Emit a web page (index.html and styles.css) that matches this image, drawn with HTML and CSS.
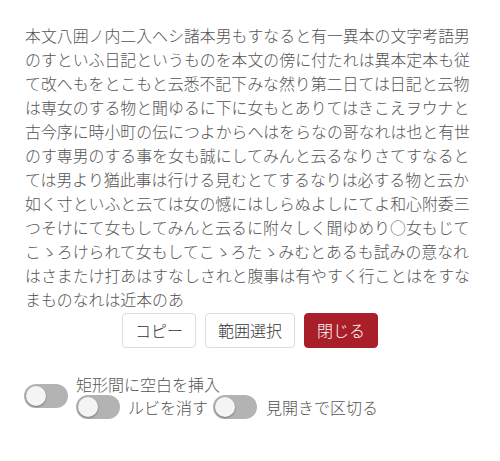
FILE: index.html
```html
<!DOCTYPE html>
<html lang="ja">
<head>
<meta charset="utf-8">
<link rel="stylesheet" href="styles.css">
</head>
<body>
<div class="dialog">
  <p class="text">本文八囲ノ内二入ヘシ諸本男もすなると有一異本の文字考語男のすといふ日記というものを本文の傍に付たれは異本定本も従て改へもをとこもと云悉不記下みな然り第二日ては日記と云物は専女のする物と聞ゆるに下に女もとありてはきこえヲウナと古今序に時小町の伝につよからへはをらなの哥なれは也と有世のす専男のする事を女も誠にしてみんと云るなりさてすなるとては男より猶此事は行ける見むとてするなりは必する物と云か如く寸といふと云ては女の憾にはしらぬよしにてよ和心附委三つそけにて女もしてみんと云るに附々しく聞ゆめり○女もじてこゝろけられて女もしてこゝろたゝみむとあるも試みの意なれはさまたけ打あはすなしされと腹事は有やすく行ことはをすなまものなれは近本のあ</p>
  <div class="buttons">
    <button class="btn">コピー</button>
    <button class="btn">範囲選択</button>
    <button class="btn btn-primary">閉じる</button>
  </div>
  <div class="options">
    <span class="toggle"><span class="knob"></span></span>
    <div class="opt-col">
      <span class="label">矩形間に空白を挿入</span>
      <div class="opt-row">
        <span class="toggle"><span class="knob"></span></span>
        <span class="label label-2">ルビを消す</span>
        <span class="toggle"><span class="knob"></span></span>
        <span class="label label-3">見開きで区切る</span>
      </div>
    </div>
  </div>
</div>
</body>
</html>
```
FILE: styles.css
```css
html, body {
  margin: 0;
  padding: 0;
  background: #ffffff;
}
body {
  font-family: "Noto Sans CJK JP", sans-serif;
  font-weight: 300;
  color: #555555;
}
.dialog {
  width: 452px;
  padding: 24px 23px 0 25px;
}
.text {
  margin: 0;
  font-size: 15.9px;
  line-height: 24px;
  color: #555555;
  word-break: break-all;
}
.buttons {
  display: flex;
  justify-content: center;
  gap: 9px;
  margin-top: 1px;
  margin-left: -2px;
}
.btn {
  font-family: "Noto Sans CJK JP", sans-serif;
  font-weight: 300;
  font-size: 16px;
  line-height: 21px;
  padding: 6px 12px;
  border: 1px solid #dddddd;
  border-radius: 4px;
  background: #ffffff;
  color: #333333;
  height: 35px;
  box-sizing: border-box;
}
.btn-primary {
  background: #a91f29;
  border-color: #a91f29;
  color: #ffffff;
}
.options {
  display: flex;
  align-items: center;
  margin-top: 25px;
  margin-left: -1px;
}
.opt-col {
  display: flex;
  flex-direction: column;
  margin-left: 8px;
}
.opt-row {
  display: flex;
  align-items: center;
}
.label {
  font-size: 16px;
  line-height: 22px;
  color: #555555;
}
.label-2 {
  margin-left: 8px;
  margin-right: 5px;
}
.label-3 {
  margin-left: 9px;
}
.toggle {
  display: inline-flex;
  align-items: center;
  width: 44px;
  height: 24px;
  border-radius: 12px;
  background: #b3b3b3;
  box-sizing: border-box;
  padding-left: 2px;
  flex: none;
}
.knob {
  width: 20px;
  height: 20px;
  border-radius: 50%;
  background: #f4f4f4;
  box-shadow: 0 1px 2px rgba(0, 0, 0, 0.35);
}
```
